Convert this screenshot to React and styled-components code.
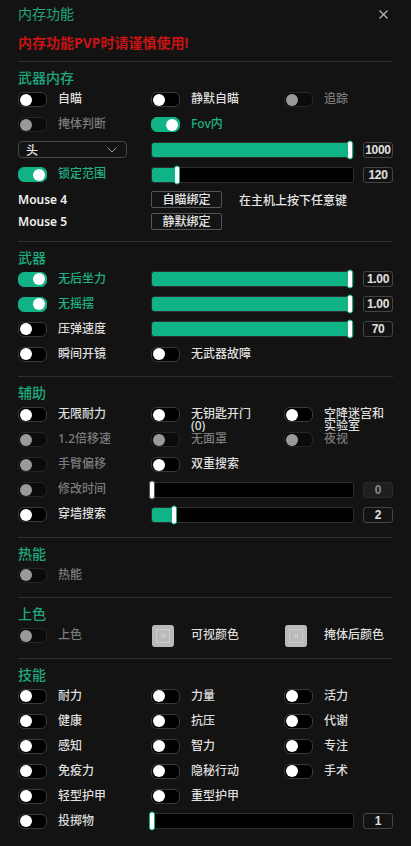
import React from "react";
import styled, { createGlobalStyle } from "styled-components";

const GREEN = "#10b386";
const TITLE_GREEN = "#1fa87d";

const GlobalStyle = createGlobalStyle`
  html, body {
    margin: 0;
    background: #131313;
  }
  body {
    font-family: "Noto Sans", "Noto Sans CJK SC", sans-serif;
    color: #dedede;
  }
`;

const Panel = styled.div`
  width: 411px;
  height: 846px;
  box-sizing: border-box;
  padding: 0 18px;
  background: #131313;
  overflow: hidden;
`;

const TitleBar = styled.div`
  display: flex;
  justify-content: space-between;
  align-items: center;
  height: 18px;
  margin-top: 5px;
`;

const Title = styled.div`
  font-size: 14px;
  line-height: 18px;
  color: ${TITLE_GREEN};
`;

const Close = styled.svg`
  width: 9px;
  height: 9px;
  margin-right: 5px;
`;

const Warning = styled.div`
  margin: 10.5px 0 9.5px;
  font-size: 14px;
  line-height: 18px;
  font-weight: 700;
  color: #c81414;
`;

const Section = styled.section`
  border-top: 1px solid #2f2f2f;
  padding: 7px 0 14.5px;
`;

const SectionTitle = styled.div`
  font-size: 14px;
  line-height: 18px;
  font-weight: 500;
  color: ${TITLE_GREEN};
`;

const Rows = styled.div`
  display: flex;
  flex-direction: column;
  gap: 10px;
  margin-top: 5px;
`;

const Row = styled.div`
  display: grid;
  grid-template-columns: 133px 133px 1fr;
  align-items: center;
  height: 15px;
`;

const SliderRow = styled.div`
  display: flex;
  align-items: center;
  height: 15px;
`;

const Lead = styled.div`
  width: 133px;
  flex: none;
  display: flex;
  align-items: center;
  height: 15px;
`;

const Item = styled.div`
  display: flex;
  align-items: flex-start;
  gap: 11px;
  height: 15px;
`;

const Switch = styled.span`
  flex: none;
  display: flex;
  align-items: center;
  justify-content: ${(p) => (p.$on ? "flex-end" : "flex-start")};
  width: 29px;
  height: 15px;
  padding: 0 1px;
  box-sizing: border-box;
  border-radius: 6px;
  border: 1px solid
    ${(p) => (p.$on ? GREEN : p.$disabled ? "#262626" : "#3a3a3a")};
  background: ${(p) => (p.$on ? GREEN : p.$disabled ? "#0b0b0b" : "#000")};
`;

const Knob = styled.span`
  width: 12px;
  height: 12px;
  border-radius: 50%;
  background: ${(p) => (p.$disabled ? "#9a9a9a" : "#fff")};
`;

const Label = styled.span`
  max-width: 70px;
  margin-top: 1px;
  font-size: 12px;
  line-height: 12px;
  font-weight: 500;
  color: ${(p) => (p.$on ? "#1fb184" : p.$disabled ? "#7b7b7b" : "#dedede")};
`;

const Select = styled.div`
  display: flex;
  align-items: center;
  justify-content: space-between;
  width: 109px;
  height: 17px;
  box-sizing: border-box;
  padding: 0 9px 0 7px;
  border: 1px solid #464646;
  border-radius: 4px;
  font-size: 12px;
  font-weight: 500;
  color: #e6e6e6;
`;

const Track = styled.div`
  position: relative;
  flex: 1;
  height: 16px;
  box-sizing: border-box;
  background: #000;
  border: 1px solid #2e2e2e;
  border-radius: 3px;
`;

const Fill = styled.div`
  position: absolute;
  left: 0;
  top: 0;
  bottom: 0;
  background: ${GREEN};
  border-radius: 2px;
`;

const Thumb = styled.div`
  position: absolute;
  top: 50%;
  transform: translateY(-50%);
  width: 6px;
  height: 19px;
  box-sizing: border-box;
  background: #fff;
  border: 1.5px solid ${(p) => (p.$disabled ? "#555" : GREEN)};
  border-radius: 3px;
`;

const ValueBox = styled.div`
  flex: none;
  width: 30px;
  height: 16px;
  margin-left: 9px;
  box-sizing: border-box;
  display: flex;
  align-items: center;
  justify-content: center;
  border: 1px solid ${(p) => (p.$disabled ? "#2a2a2a" : "#454545")};
  border-radius: 3px;
  background: ${(p) => (p.$disabled ? "#1f1f1f" : "transparent")};
  font-family: "Liberation Sans", "Noto Sans", sans-serif;
  font-size: 12px;
  font-weight: 700;
  letter-spacing: -0.3px;
  color: ${(p) => (p.$disabled ? "#8a8a8a" : "#e0e0e0")};
`;

const KeyGroup = styled.div`
  display: flex;
  flex-direction: column;
  gap: 7px;
  margin-bottom: -3px;
`;

const KeyRow = styled.div`
  display: flex;
  align-items: center;
  height: 15px;
`;

const KeyName = styled.span`
  width: 133px;
  font-size: 12px;
  font-weight: 600;
  color: #f0f0f0;
`;

const BindButton = styled.button`
  width: 71px;
  height: 17px;
  padding: 0;
  box-sizing: border-box;
  background: transparent;
  border: 1px solid #555;
  border-radius: 2px;
  font-family: inherit;
  font-size: 12px;
  font-weight: 500;
  line-height: 15px;
  color: #e6e6e6;
`;

const Hint = styled.span`
  margin-left: 17px;
  font-size: 12px;
  font-weight: 500;
  color: #e6e6e6;
`;

const SwatchSlot = styled.div`
  width: 29px;
  flex: none;
  display: flex;
  justify-content: flex-start;
  padding-left: 1px;
  box-sizing: border-box;
`;

const Swatch = styled.div`
  width: 22px;
  height: 22px;
  margin-top: -3.5px;
  box-sizing: border-box;
  padding: 4px;
  background: #bababa;
  border-radius: 3px;
`;

const SwatchInner = styled.div`
  width: 100%;
  height: 100%;
  box-sizing: border-box;
  border: 1px solid #cdcdcd;
  display: flex;
  align-items: center;
  justify-content: center;
`;

const Toggle = ({ label, on, disabled }) => (
  <Item>
    <Switch $on={on} $disabled={disabled}>
      <Knob $disabled={disabled} />
    </Switch>
    <Label $on={on} $disabled={disabled}>
      {label}
    </Label>
  </Item>
);

const Slider = ({ p, disabled }) => (
  <Track>
    <Fill style={{ width: `calc(${p} * (100% - 3px))` }} />
    <Thumb
      $disabled={disabled}
      style={{ left: `calc(${p} * (100% - 3px) - 3px)` }}
    />
  </Track>
);

const ColorItem = ({ label }) => (
  <Item>
    <SwatchSlot>
      <Swatch>
        <SwatchInner>
          <svg width="5" height="5" viewBox="0 0 5 5">
            <path d="M0.5 0.5L4.5 4.5M4.5 0.5L0.5 4.5" stroke="#e6e6e6" strokeWidth="0.8" />
          </svg>
        </SwatchInner>
      </Swatch>
    </SwatchSlot>
    <Label>{label}</Label>
  </Item>
);

const ToggleRow = ({ items }) => (
  <Row>
    {items.map((it) => (
      <Toggle key={it.label} {...it} />
    ))}
  </Row>
);

const skills = [
  ["耐力", "力量", "活力"],
  ["健康", "抗压", "代谢"],
  ["感知", "智力", "专注"],
  ["免疫力", "隐秘行动", "手术"],
  ["轻型护甲", "重型护甲"],
];

export default function App() {
  return (
    <Panel>
      <GlobalStyle />
      <TitleBar>
        <Title>内存功能</Title>
        <Close viewBox="0 0 9 9">
          <path d="M0.5 0.5L8.5 8.5M8.5 0.5L0.5 8.5" stroke="#bdbdbd" strokeWidth="1.1" />
        </Close>
      </TitleBar>
      <Warning>内存功能PVP时请谨慎使用!</Warning>

      <Section>
        <SectionTitle>武器内存</SectionTitle>
        <Rows>
          <ToggleRow
            items={[
              { label: "自瞄" },
              { label: "静默自瞄" },
              { label: "追踪", disabled: true },
            ]}
          />
          <ToggleRow
            items={[{ label: "掩体判断", disabled: true }, { label: "Fov内", on: true }]}
          />
          <SliderRow>
            <Lead>
              <Select>
                <span>头</span>
                <svg width="10" height="6" viewBox="0 0 10 6">
                  <path d="M0.5 0.5L5 5L9.5 0.5" fill="none" stroke="#9a9a9a" strokeWidth="1" />
                </svg>
              </Select>
            </Lead>
            <Slider p={1} />
            <ValueBox>1000</ValueBox>
          </SliderRow>
          <SliderRow>
            <Lead>
              <Toggle label="锁定范围" on />
            </Lead>
            <Slider p={0.125} />
            <ValueBox>120</ValueBox>
          </SliderRow>
          <KeyGroup>
            <KeyRow>
              <KeyName>Mouse 4</KeyName>
              <BindButton>自瞄绑定</BindButton>
              <Hint>在主机上按下任意键</Hint>
            </KeyRow>
            <KeyRow>
              <KeyName>Mouse 5</KeyName>
              <BindButton>静默绑定</BindButton>
            </KeyRow>
          </KeyGroup>
        </Rows>
      </Section>

      <Section>
        <SectionTitle>武器</SectionTitle>
        <Rows>
          <SliderRow>
            <Lead>
              <Toggle label="无后坐力" on />
            </Lead>
            <Slider p={1} />
            <ValueBox>1.00</ValueBox>
          </SliderRow>
          <SliderRow>
            <Lead>
              <Toggle label="无摇摆" on />
            </Lead>
            <Slider p={1} />
            <ValueBox>1.00</ValueBox>
          </SliderRow>
          <SliderRow>
            <Lead>
              <Toggle label="压弹速度" />
            </Lead>
            <Slider p={1} />
            <ValueBox>70</ValueBox>
          </SliderRow>
          <ToggleRow items={[{ label: "瞬间开镜" }, { label: "无武器故障" }]} />
        </Rows>
      </Section>

      <Section>
        <SectionTitle>辅助</SectionTitle>
        <Rows>
          <ToggleRow
            items={[
              { label: "无限耐力" },
              { label: "无钥匙开门 (0)" },
              { label: "空降迷宫和实验室" },
            ]}
          />
          <ToggleRow
            items={[
              { label: "1.2倍移速", disabled: true },
              { label: "无面罩", disabled: true },
              { label: "夜视", disabled: true },
            ]}
          />
          <ToggleRow items={[{ label: "手臂偏移", disabled: true }, { label: "双重搜索" }]} />
          <SliderRow>
            <Lead>
              <Toggle label="修改时间" disabled />
            </Lead>
            <Slider p={0} disabled />
            <ValueBox $disabled>0</ValueBox>
          </SliderRow>
          <SliderRow>
            <Lead>
              <Toggle label="穿墙搜索" />
            </Lead>
            <Slider p={0.11} />
            <ValueBox>2</ValueBox>
          </SliderRow>
        </Rows>
      </Section>

      <Section>
        <SectionTitle>热能</SectionTitle>
        <Rows>
          <ToggleRow items={[{ label: "热能", disabled: true }]} />
        </Rows>
      </Section>

      <Section>
        <SectionTitle>上色</SectionTitle>
        <Rows>
          <Row>
            <Toggle label="上色" disabled />
            <ColorItem label="可视颜色" />
            <ColorItem label="掩体后颜色" />
          </Row>
        </Rows>
      </Section>

      <Section>
        <SectionTitle>技能</SectionTitle>
        <Rows>
          {skills.map((row) => (
            <ToggleRow key={row[0]} items={row.map((label) => ({ label }))} />
          ))}
          <SliderRow>
            <Lead>
              <Toggle label="投掷物" />
            </Lead>
            <Slider p={0} />
            <ValueBox>1</ValueBox>
          </SliderRow>
        </Rows>
      </Section>
    </Panel>
  );
}
